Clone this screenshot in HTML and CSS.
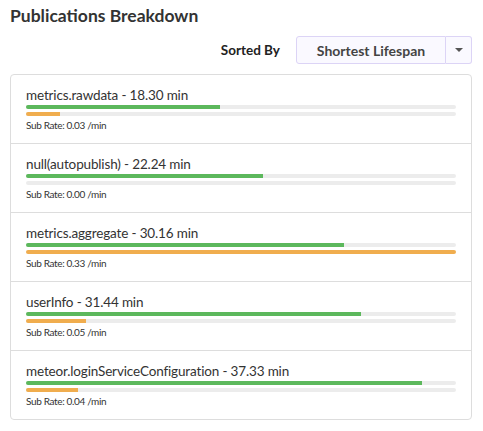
FILE: index.html
```html
<!DOCTYPE html>
<html>
<head>
<meta charset="utf-8">
<link rel="stylesheet" href="styles.css">
</head>
<body>
<div class="panel">
  <h2 class="title">Publications Breakdown</h2>
  <div class="sort-row">
    <span class="sort-label">Sorted By</span>
    <div class="btn-group">
      <button class="btn btn-main">Shortest Lifespan</button>
      <button class="btn btn-caret"><span class="caret"></span></button>
    </div>
  </div>
  <div class="card">
    <div class="row">
      <div class="row-title">metrics.rawdata - 18.30 min</div>
      <div class="track"><div class="bar green" style="width:45%"></div></div>
      <div class="track"><div class="bar orange" style="width:8%"></div></div>
      <div class="sub">Sub Rate: 0.03 /min</div>
    </div>
    <div class="row">
      <div class="row-title">null(autopublish) - 22.24 min</div>
      <div class="track"><div class="bar green" style="width:55%"></div></div>
      <div class="track"><div class="bar orange" style="width:0%"></div></div>
      <div class="sub">Sub Rate: 0.00 /min</div>
    </div>
    <div class="row">
      <div class="row-title">metrics.aggregate - 30.16 min</div>
      <div class="track"><div class="bar green" style="width:74%"></div></div>
      <div class="track"><div class="bar orange" style="width:100%"></div></div>
      <div class="sub">Sub Rate: 0.33 /min</div>
    </div>
    <div class="row">
      <div class="row-title">userInfo - 31.44 min</div>
      <div class="track"><div class="bar green" style="width:78%"></div></div>
      <div class="track"><div class="bar orange" style="width:14%"></div></div>
      <div class="sub">Sub Rate: 0.05 /min</div>
    </div>
    <div class="row">
      <div class="row-title">meteor.loginServiceConfiguration - 37.33 min</div>
      <div class="track"><div class="bar green" style="width:92%"></div></div>
      <div class="track"><div class="bar orange" style="width:12%"></div></div>
      <div class="sub">Sub Rate: 0.04 /min</div>
    </div>
  </div>
</div>
</body>
</html>
```

FILE: styles.css
```css
* { box-sizing: border-box; }
html, body { margin: 0; padding: 0; background: #fff; }
body {
  font-family: Lato, "Noto Sans", sans-serif;
  color: #333;
}
.panel {
  padding: 5px 11px 0 10px;
}
.title {
  margin: 0;
  font-size: 17.5px;
  line-height: 22px;
  font-weight: 700;
  color: #333;
}
.sort-row {
  display: flex;
  justify-content: flex-end;
  align-items: center;
  gap: 16px;
  margin-top: 9px;
}
.sort-label {
  font-size: 13.5px;
  font-weight: 700;
  color: #222;
}
.btn-group {
  display: flex;
  height: 28px;
}
.btn {
  font-family: inherit;
  background: #faf9ff;
  border: 1px solid #dcd4f6;
  color: #444;
  margin: 0;
  padding: 0;
  height: 28px;
}
.btn-main {
  width: 150px;
  font-size: 14px;
  font-weight: 700;
  border-radius: 3px 0 0 3px;
}
.btn-caret {
  width: 26px;
  border-left: none;
  border-radius: 0 3px 3px 0;
  display: flex;
  align-items: center;
  justify-content: center;
}
.caret {
  width: 0;
  height: 0;
  border-left: 4px solid transparent;
  border-right: 4px solid transparent;
  border-top: 4px solid #555;
}
.card {
  margin-top: 10px;
  border: 1px solid #ddd;
  border-radius: 4px;
}
.row {
  padding: 10px 15px 11px 15px;
}
.row + .row {
  border-top: 1px solid #ddd;
}
.row-title {
  font-size: 13.5px;
  letter-spacing: -0.15px;
  line-height: 20px;
  color: #333;
}
.track {
  height: 4px;
  background: #ececec;
  border-radius: 2px;
  overflow: hidden;
}
.track + .track {
  margin-top: 3px;
}
.bar {
  height: 100%;
}
.green { background: #5cb85c; }
.orange { background: #f0ad4e; }
.sub {
  margin-top: 2px;
  font-size: 10px;
  letter-spacing: -0.35px;
  line-height: 14px;
  color: #333;
}
```
